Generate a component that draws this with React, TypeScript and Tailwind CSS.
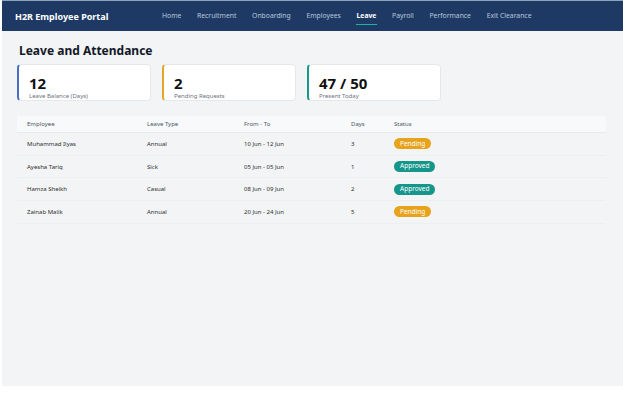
const navItems = ['Home', 'Recruitment', 'Onboarding', 'Employees', 'Leave', 'Payroll', 'Performance', 'Exit Clearance'];

const stats = [
  { value: '12', label: 'Leave Balance (Days)', border: 'border-l-[#4a6fc0]' },
  { value: '2', label: 'Pending Requests', border: 'border-l-[#e3a52a]' },
  { value: '47 / 50', label: 'Present Today', border: 'border-l-[#17998a]' },
];

const leaves = [
  { name: 'Muhammad Ilyas', type: 'Annual', range: '10 Jun - 12 Jun', days: 3, status: 'Pending' },
  { name: 'Ayesha Tariq', type: 'Sick', range: '05 Jun - 05 Jun', days: 1, status: 'Approved' },
  { name: 'Hamza Sheikh', type: 'Casual', range: '08 Jun - 09 Jun', days: 2, status: 'Approved' },
  { name: 'Zainab Malik', type: 'Annual', range: '20 Jun - 24 Jun', days: 5, status: 'Pending' },
];

// column template shared by header and rows
const cols = 'grid grid-cols-[120px_97px_107px_43px_1fr] items-center pl-[10px]';

function StatusBadge({ status }: { status: string }) {
  const color = status === 'Pending' ? 'bg-[#e8a31c]' : 'bg-[#16968a]';
  return (
    <span className={`inline-flex items-center h-[11px] px-[6px] rounded-full text-[6.5px] leading-none text-white ${color}`}>
      {status}
    </span>
  );
}

export default function App() {
  return (
    <div className="w-[623px] h-[405px] bg-white" style={{ fontFamily: '"Noto Sans", "Open Sans", sans-serif' }}>
      <div className="ml-[2px] w-[621px] h-[386px] bg-[#f3f4f6] flex flex-col">
        <header className="h-[31px] bg-[#1e3a64] border-t border-[#8fa3bd] flex items-center pl-[13px] pt-[1px]">
          <div className="text-white font-bold text-[9px] w-[147px]">H2R Employee Portal</div>
          <nav className="flex items-center gap-[15.7px]">
            {navItems.map((item) =>
              item === 'Leave' ? (
                <div key={item} className="relative text-white font-bold text-[6.8px]">
                  {item}
                  <div className="absolute -left-[1px] -right-[1px] -bottom-[3px] h-[1px] bg-[#22b3a0]" />
                </div>
              ) : (
                <div key={item} className="text-[#b9c8de] text-[6.8px]">
                  {item}
                </div>
              )
            )}
          </nav>
        </header>

        <main className="px-[15px] pt-[14px]">
          <h1 className="text-[12px] font-bold text-[#111827] leading-none ml-[2px]">Leave and Attendance</h1>

          <div className="flex gap-[11px] mt-[7px]">
            {stats.map((s) => (
              <div
                key={s.label}
                className={`w-[134px] h-[37px] bg-white rounded-[4px] border border-[#e5e7eb] border-l-2 ${s.border} pl-[10px] pt-[11px]`}
              >
                <div className="text-[15px] font-bold text-[#111] leading-none">{s.value}</div>
                <div className="text-[6px] text-[#6b7280] mt-[2px] leading-none">{s.label}</div>
              </div>
            ))}
          </div>

          <div className="mt-[15px] w-[589px] text-[6px] leading-none">
            <div className={`${cols} h-[17px] bg-[#f8f9fb] border-b border-[#e8eaee] text-[#4b5563]`}>
              <div>Employee</div>
              <div>Leave Type</div>
              <div>From - To</div>
              <div>Days</div>
              <div>Status</div>
            </div>
            {leaves.map((l) => (
              <div key={l.name} className={`${cols} h-[22.7px] border-b border-[#eceef1] text-[#2d2d2d]`}>
                <div>{l.name}</div>
                <div>{l.type}</div>
                <div>{l.range}</div>
                <div>{l.days}</div>
                <div>
                  <StatusBadge status={l.status} />
                </div>
              </div>
            ))}
          </div>
        </main>
      </div>
    </div>
  );
}
